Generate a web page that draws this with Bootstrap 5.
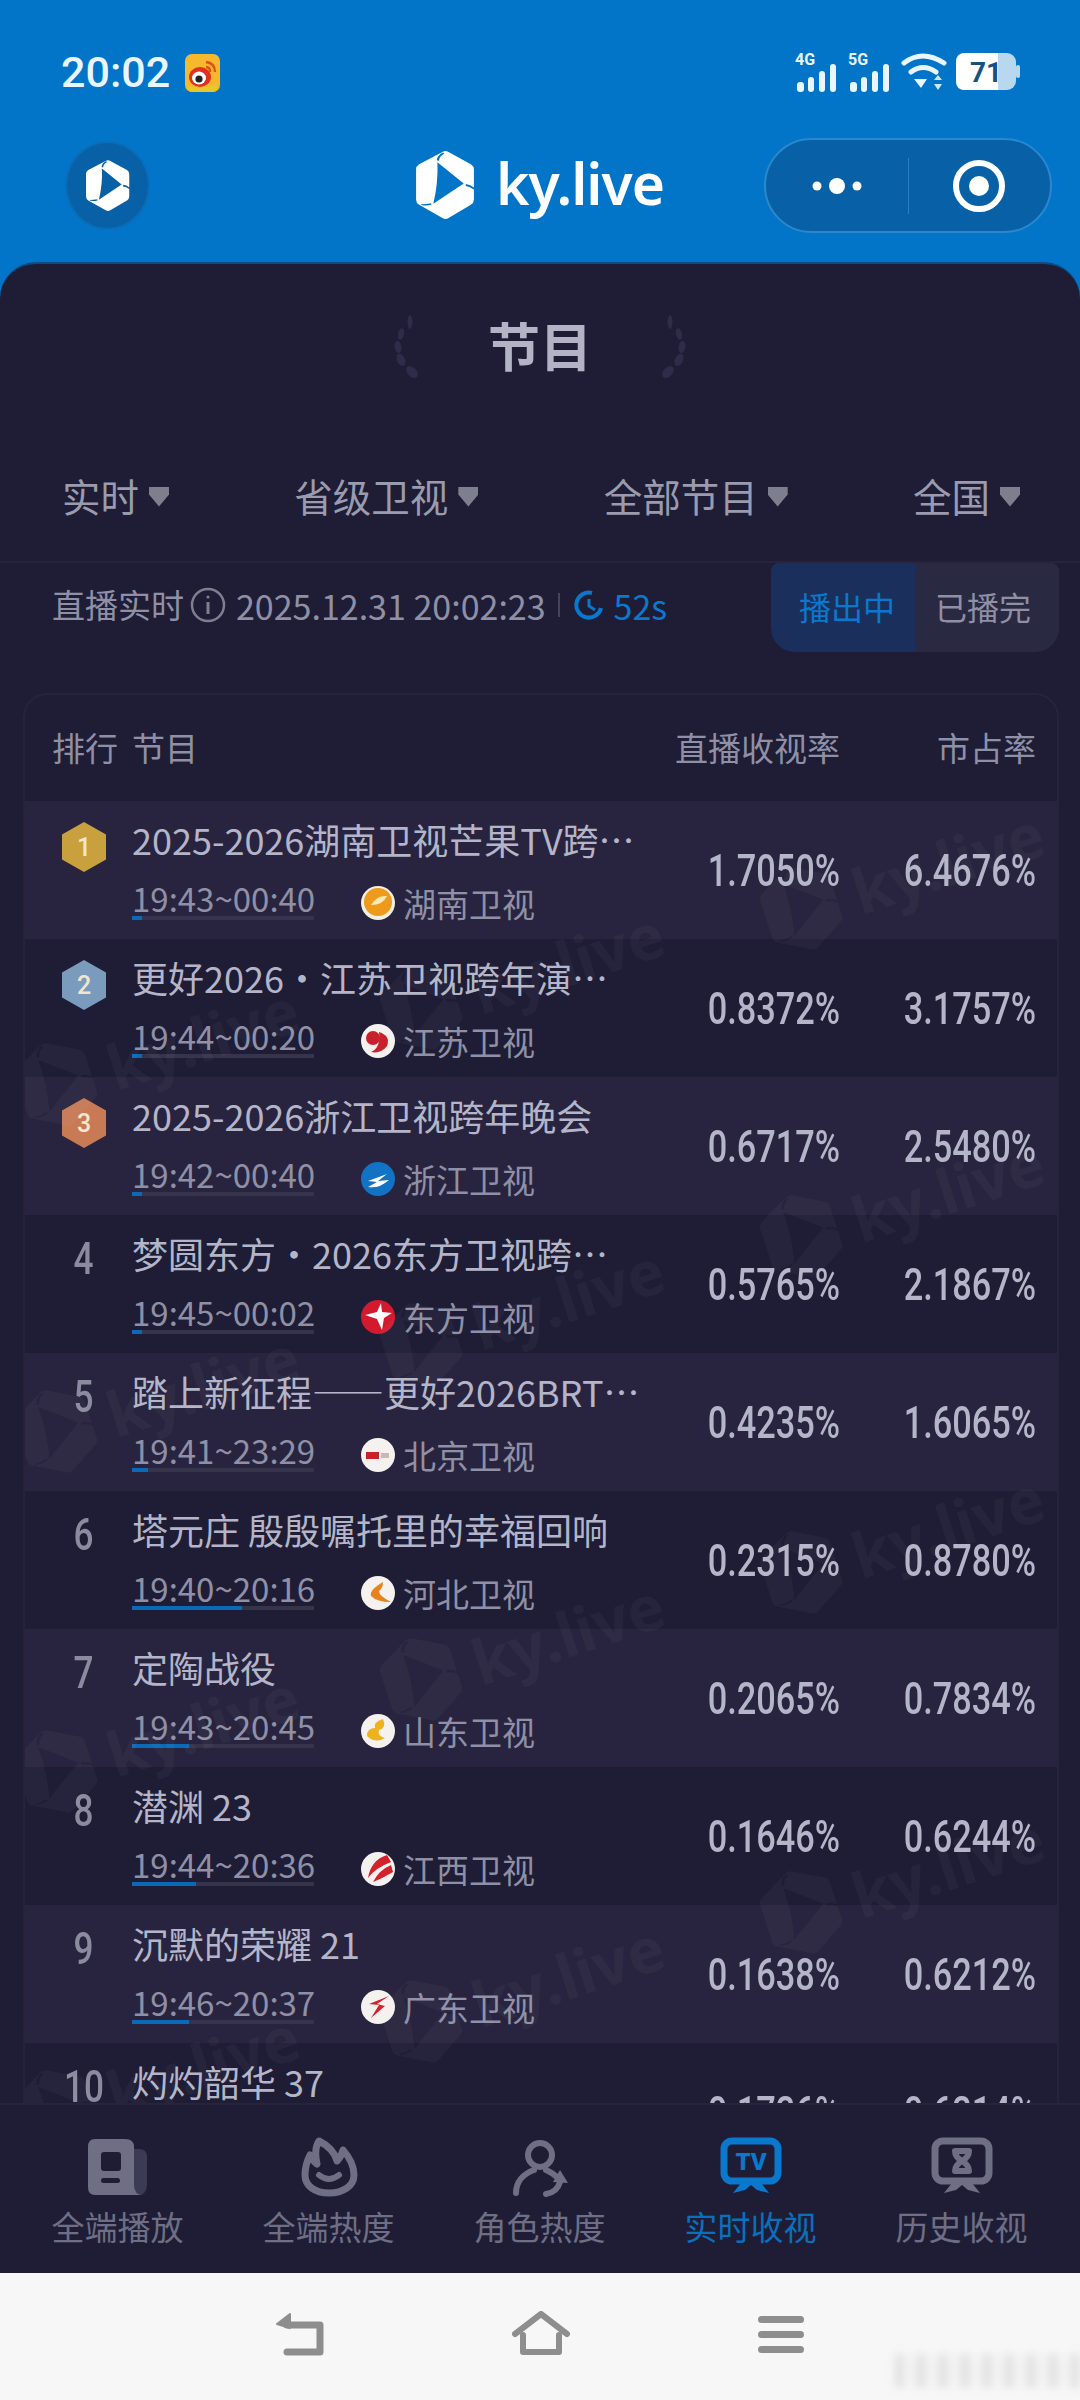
<!DOCTYPE html>
<html lang="zh-CN">
<head>
    <meta charset="UTF-8">
    <meta name="viewport" content="width=device-width, initial-scale=1.0">
    <title>ky.live 实时收视</title>
    <link href="https://cdn.jsdelivr.net/npm/bootstrap@5.3.0/dist/css/bootstrap.min.css" rel="stylesheet">
    <style>
        html, body { height: 2400px; }
        body {
            width: 1080px;
            overflow: hidden;
            background: #0275c9;
            font-family: "Noto Sans CJK SC", "Noto Sans", sans-serif;
            color: #8f90a6;
        }
        .page-wrap { height: 2400px; }

        /* blue top */
        .top-area { height: 262px; flex: none; background: #0275c9; }
        .status-row { height: 138px; padding: 46px 60px 0 61px; }
        .clock { font: 500 43px/52px Roboto, sans-serif; color: #eaf6ff; }
        .weibo { margin: 8px 0 0 15px; }
        .status-icons { margin-top: 7px; gap: 9px; }
        .sig-icon { margin-top: -6px; }
        .head-row { height: 95px; padding: 0 28px 0 65px; }
        .round-logo {
            width: 85px; height: 89px; flex: none; border-radius: 50%;
            background: #0861a7; border: 2px solid #0a6db8;
        }
        .brand { margin-left: 266px; gap: 21px; }
        .brand-name { font: 600 57px/70px "Noto Sans", sans-serif; color: #fff; letter-spacing: -1px; margin-top: -6px; }
        .capsule {
            width: 288px; height: 95px; flex: none; border-radius: 48px;
            background: #0861a7; border: 2px solid #2a88cf;
        }
        .capsule-part { flex: 1; }
        .capsule-line { width: 1px; height: 56px; background: #2a7fc2; }

        /* dark panel */
        .panel {
            min-height: 0;
            background: #1e1d35;
            border-radius: 36px 36px 0 0;
            border-top: 2px solid #0c4c86;
        }
        .title-row { height: 166px; flex: none; gap: 64px; }
        .page-title { font-size: 52px; font-weight: 700; color: #b2b3c4; line-height: 1; margin-top: -5px; }
        .filter-row { height: 133px; flex: none; padding: 0 60px 0 62px; border-bottom: 2px solid #25243c; font-size: 38.5px; color: #9a9bae; }
        .filter-item { gap: 10px; }
        .caret-shape { width: 20px; height: 20px; background: #7e7f8e; clip-path: polygon(0 0, 100% 0, 100% 40%, 50% 100%, 0 40%); margin-top: 2px; }
        .info-row { height: 89px; flex: none; padding: 0 21px 0 52px; font-size: 33px; }
        .info-text { gap: 6px; margin-top: -5px; }
        .info-date { font-size: 34px; }
        .tick { width: 2px; height: 24px; background: #45445c; margin: 0 8px 0 6px; }
        .live-blue { color: #0a78cc; font-size: 34px; }
        .seg { width: 288px; height: 89px; border-radius: 8px 8px 24px 24px; overflow: hidden; font-size: 32px; }
        .seg-on { width: 144px; background: #1a2f5c; color: #0a78cc; padding: 0 0 3px 8px; }
        .seg-off { width: 144px; background: #2a2942; padding: 0 8px 3px 0; }

        /* table */
        .rank-table {
            min-height: 0;
            margin: 41px 21px 0 23px;
            border: 2px solid #25243c;
            border-bottom: 0;
            border-radius: 24px 24px 0 0;
            overflow: hidden;
        }
        .thead-row { height: 106px; flex: none; padding: 0 21px 0 27px; font-size: 33px; }
        .th-rank { width: 80px; }
        .th-live { width: 200px; text-align: right; }
        .th-share { width: 196px; text-align: right; }
        .prog-row { height: 138px; flex: none; padding: 14px 21px 0 14px; }
        .prog-row.alt { background: #28243f; }
        .rank-col { width: 90px; margin-right: 3px; height: 48px; }
        .rank-num { display: inline-block; font: 500 44px/52px Roboto, sans-serif; color: #8a8b9f; transform: scaleX(.8); margin-top: 4px; }
        .medal {
            width: 44px; height: 50px; margin-top: 7px; color: #f1e6cf;
            font: 500 25px/1 Roboto, sans-serif;
            clip-path: polygon(50% 0, 100% 25%, 100% 75%, 50% 100%, 0 75%, 0 25%);
        }
        .prog-main { width: 530px; }
        .prog-name { font-size: 36px; line-height: 48px; color: #b4b5c8; white-space: nowrap; }
        .prog-sub { margin-top: 17px; font-size: 33px; }
        .time-wrap { width: 182px; margin-right: 47px; }
        .time-text { line-height: 36px; white-space: nowrap; }
        .time-bar { height: 4px; background: #35344a; }
        .time-fill { height: 4px; background: #0a6ab8; }
        .channel { line-height: 36px; gap: 8px; margin-top: 5px; }
        .pct {
            width: 196px; text-align: right; margin-top: 34px;
            font: 500 44px/44px Roboto, sans-serif;
            color: #b4b5c8;
            transform: scaleX(.78);
            transform-origin: right center;
        }
        .pct.first { width: 178px; }

        /* watermark over the rows */
        .wm-layer { inset: 0; pointer-events: none; }
        .wm-item {
            transform: rotate(-18deg); transform-origin: 40px 45px; gap: 14px;
            color: rgba(255, 255, 255, .035);
            font: 700 62px/90px "Noto Sans", sans-serif;
            white-space: nowrap;
        }

        /* tabs */
        .tab-bar { height: 170px; flex: none; padding: 0 12px; background: #1e1d35; border-top: 2px solid #26253d; }
        .tab-item { width: 211px; color: #6e6e84; font-size: 33px; padding-top: 32px; }
        .tab-item.on { color: #0a6fbd; }
        .tab-label { line-height: 44px; margin-top: 7px; }

        /* phone nav */
        .phone-nav { height: 127px; flex: none; background: #f7f7f7; padding-top: 38px; gap: 188px; }
        .smudge {
            right: 0; bottom: 12px; width: 185px; height: 34px; filter: blur(4px); opacity: .5;
            background: repeating-linear-gradient(90deg, #c9c9c9 0 8px, #f0f0f0 8px 22px);
        }
    </style>
</head>
<body>
    <svg width="0" height="0" class="position-absolute">
        <symbol id="ky-mark" viewBox="0 0 58 70">
            <path fill-rule="evenodd" d="M26 2 Q29 0 32 2 L54 14 Q57 16 57 19 L57 49 Q57 52 54 54 L32 67 Q29 69 26 67 L3 54 Q0 52 0 49 L0 19 Q0 16 3 14 Z M21 12 L47 33 L17 53 Q22 32 21 12 Z M20.5 10 Q21 5 26.5 2.5 L28 3.5 Q23 6 22.5 10.5 Z M49 33.5 Q54 34 57 37 L57 39 Q53 36 49 35.5 Z M15 54 Q11 55 6 54.5 L4.5 53.5 Q10 53.5 15 52.5 Z" fill="currentColor"/>
        </symbol>
    </svg>

    <div class="page-wrap d-flex flex-column position-relative">
        <div class="top-area">
            <div class="status-row d-flex justify-content-between">
                <div class="d-flex align-items-start">
                    <span class="clock">20:02</span>
                    <svg class="weibo" width="35" height="38" viewBox="0 0 35 38">
                        <rect width="35" height="38" rx="7" fill="#f6b82c"/>
                        <path d="M3 32 Q17 36 32 30 V33 Q32 38 27 38 H8 Q3 38 3 33Z" fill="#e5c92c"/>
                        <ellipse cx="15" cy="23" rx="11" ry="10" fill="#e0301e"/>
                        <ellipse cx="14" cy="24" rx="7" ry="6.5" fill="#fff"/>
                        <circle cx="14" cy="25" r="3.6" fill="#222"/>
                        <path d="M21 8 Q30 9 30 18 M21 13 Q25 13 25 18" stroke="#e0501e" stroke-width="2.5" fill="none"/>
                    </svg>
                </div>
                <div class="status-icons d-flex align-items-start">
                    <svg class="sig-icon" width="44" height="45" viewBox="0 -6 44 45" fill="#eaf6ff">
                        <text x="0" y="12" font-family="Roboto" font-weight="700" font-size="16">4G</text>
                        <rect x="2" y="29" width="7" height="10" rx="3"/><rect x="13" y="24" width="6" height="15" rx="3"/><rect x="24" y="18" width="6" height="21" rx="3"/><rect x="35" y="11" width="6" height="28" rx="3"/>
                    </svg>
                    <svg class="sig-icon" width="44" height="45" viewBox="0 -6 44 45" fill="#eaf6ff">
                        <text x="0" y="12" font-family="Roboto" font-weight="700" font-size="16">5G</text>
                        <rect x="2" y="29" width="7" height="10" rx="3"/><rect x="13" y="24" width="6" height="15" rx="3"/><rect x="24" y="18" width="6" height="21" rx="3"/><rect x="35" y="11" width="6" height="28" rx="3"/>
                    </svg>
                    <svg width="46" height="38" viewBox="0 0 46 38" fill="none" stroke="#eaf6ff" stroke-width="5" stroke-linecap="round">
                        <path d="M3 10 Q21 -4 43 10"/>
                        <path d="M10 19 Q22 10 35 19"/>
                        <path d="M13 26 L20 35 L26 26 Z" fill="#eaf6ff" stroke="none"/>
                        <path d="M33 27 L37 22 L41 27 Z M33 31 L41 31 L37 37 Z" fill="#cfe6f7" stroke="none"/>
                    </svg>
                    <svg width="64" height="37" viewBox="0 0 64 37">
                        <rect width="60" height="37" rx="9" fill="#b9d8f0"/>
                        <path d="M9 0 H42 V37 H9 Q0 37 0 28 V9 Q0 0 9 0Z" fill="#fff"/>
                        <rect x="60" y="12" width="4" height="13" rx="2" fill="#b9d8f0"/>
                        <text x="14" y="29" font-family="Roboto" font-weight="700" font-size="28" fill="#14527f">71</text>
                    </svg>
                </div>
            </div>
            <div class="head-row d-flex align-items-center">
                <div class="round-logo d-flex align-items-center justify-content-center text-white">
                    <svg width="44" height="54"><use href="#ky-mark"/></svg>
                </div>
                <div class="brand d-flex align-items-center me-auto text-white">
                    <svg width="59" height="71"><use href="#ky-mark"/></svg>
                    <span class="brand-name">ky.live</span>
                </div>
                <div class="capsule d-flex align-items-center">
                    <div class="capsule-part d-flex justify-content-center">
                        <svg width="60" height="20" fill="#fff"><circle cx="10" cy="10" r="4.5"/><circle cx="30" cy="10" r="8"/><circle cx="50" cy="10" r="4.5"/></svg>
                    </div>
                    <div class="capsule-line"></div>
                    <div class="capsule-part d-flex justify-content-center">
                        <svg width="56" height="56" viewBox="0 0 56 56"><circle cx="28" cy="28" r="23" fill="none" stroke="#fff" stroke-width="6"/><circle cx="28" cy="28" r="10" fill="#fff"/></svg>
                    </div>
                </div>
            </div>
        </div>

        <div class="panel flex-grow-1 d-flex flex-column">
            <div class="title-row d-flex align-items-center justify-content-center">
                <svg width="36" height="66" viewBox="0 0 36 66" fill="#2e2d49">
                    <ellipse cx="22" cy="8" rx="2.5" ry="7"/><ellipse cx="13" cy="20" rx="3" ry="6" transform="rotate(12 13 20)"/><ellipse cx="10" cy="33" rx="3.5" ry="6" transform="rotate(-8 10 33)"/><ellipse cx="13" cy="46" rx="4" ry="6.5" transform="rotate(-25 13 46)"/><ellipse cx="24" cy="58" rx="4.5" ry="7" transform="rotate(-45 24 58)"/>
                </svg>
                <div class="page-title">节目</div>
                <svg width="36" height="66" viewBox="0 0 36 66" fill="#2e2d49">
                    <ellipse cx="14" cy="8" rx="2.5" ry="7"/><ellipse cx="23" cy="20" rx="3" ry="6" transform="rotate(-12 23 20)"/><ellipse cx="26" cy="33" rx="3.5" ry="6" transform="rotate(8 26 33)"/><ellipse cx="23" cy="46" rx="4" ry="6.5" transform="rotate(25 23 46)"/><ellipse cx="12" cy="58" rx="4.5" ry="7" transform="rotate(45 12 58)"/>
                </svg>
            </div>
            <div class="filter-row d-flex align-items-center justify-content-between">
                <div class="filter-item d-flex align-items-center">实时<span class="caret-shape"></span></div>
                <div class="filter-item d-flex align-items-center">省级卫视<span class="caret-shape"></span></div>
                <div class="filter-item d-flex align-items-center">全部节目<span class="caret-shape"></span></div>
                <div class="filter-item d-flex align-items-center">全国<span class="caret-shape"></span></div>
            </div>
            <div class="info-row d-flex align-items-center justify-content-between">
                <div class="info-text d-flex align-items-center">
                    <span>直播实时</span>
                    <svg width="36" height="36" viewBox="0 0 36 36" fill="none" stroke="#7e7f8e" stroke-width="2.5"><circle cx="18" cy="18" r="16"/><path d="M18 15 V27" stroke-width="3"/><circle cx="18" cy="10" r="1.6" fill="#7e7f8e" stroke="none"/></svg>
                    <span class="info-date ms-1">2025.12.31 20:02:23</span>
                    <span class="tick"></span>
                    <svg width="30" height="30" viewBox="0 0 30 30" fill="none" stroke="#0a78cc" stroke-width="4"><path d="M18 3 A12.5 12.5 0 1 0 27 18"/><path d="M15 9 V16 L21 20" stroke-width="3"/></svg>
                    <span class="live-blue ms-1">52s</span>
                </div>
                <div class="seg d-flex">
                    <div class="seg-on d-flex align-items-center justify-content-center">播出中</div>
                    <div class="seg-off d-flex align-items-center justify-content-center">已播完</div>
                </div>
            </div>

            <div class="rank-table flex-grow-1 d-flex flex-column position-relative">
                <div class="thead-row d-flex align-items-center">
                    <span class="th-rank">排行</span>
                    <span class="flex-grow-1">节目</span>
                    <span class="th-live">直播收视率</span>
                    <span class="th-share">市占率</span>
                </div>
                <div id="rows"></div>
                <div id="wm" class="wm-layer position-absolute"></div>
            </div>

            <div class="tab-bar d-flex">
                <div class="tab-item d-flex flex-column align-items-center">
                    <svg width="62" height="60" viewBox="0 0 62 60">
                        <path d="M40 12 H52 Q60 12 60 20 V48 Q60 58 50 58 H40Z" fill="#3c3b55"/>
                        <path d="M8 2 H38 Q47 2 47 10 V48 Q47 58 56 58 H8 Q1 58 1 50 V10 Q1 2 8 2Z" fill="#6e6e84"/>
                        <rect x="14" y="15" width="20" height="19" rx="3" fill="#1e1d35"/>
                        <rect x="14" y="41" width="19" height="5" rx="2.5" fill="#1e1d35"/>
                    </svg>
                    <span class="tab-label">全端播放</span>
                </div>
                <div class="tab-item d-flex flex-column align-items-center">
                    <svg width="60" height="60" viewBox="0 0 60 60" fill="none" stroke="#6e6e84" stroke-linecap="round" stroke-linejoin="round">
                        <path stroke-width="7" d="M20 4 C30 9 36 16 38 24 C41 21 43 17 44 13 C52 22 55 30 55 38 C55 49 44 56 30 56 C16 56 6 49 6 38 C6 30 8 24 11 18 C13 22 15 25 18 27 C16 18 16 10 20 4Z"/>
                        <path stroke-width="6" d="M20 38 Q30 46 40 38"/>
                    </svg>
                    <span class="tab-label">全端热度</span>
                </div>
                <div class="tab-item d-flex flex-column align-items-center">
                    <svg width="60" height="60" viewBox="0 0 60 60" fill="none" stroke="#6e6e84" stroke-width="6" stroke-linecap="round">
                        <circle cx="30" cy="18" r="12"/>
                        <path d="M6 56 C6 45 13 37 24 33"/>
                        <path d="M36 33 C41 35 45 38 49 42"/>
                        <path d="M36 57 C43 56 48 52 50 45"/>
                        <path d="M50 33 L58 46 L43 45 Z" fill="#6e6e84" stroke="none"/>
                    </svg>
                    <span class="tab-label">角色热度</span>
                </div>
                <div class="tab-item on d-flex flex-column align-items-center">
                    <svg width="62" height="60" viewBox="0 0 62 60" fill="none" stroke="#0a78cc">
                        <rect x="4" y="4" width="54" height="40" rx="8" stroke-width="7"/>
                        <path d="M21 46 L13 56 L25 53 L31 48 L37 53 L49 56 L41 46Z" fill="#0a78cc" stroke="none"/>
                        <text x="31" y="33" text-anchor="middle" font-family="Roboto" font-weight="900" font-size="24" fill="#0a78cc" stroke="none">TV</text>
                    </svg>
                    <span class="tab-label">实时收视</span>
                </div>
                <div class="tab-item d-flex flex-column align-items-center">
                    <svg width="62" height="60" viewBox="0 0 62 60" fill="none" stroke="#6e6e84">
                        <rect x="4" y="4" width="54" height="40" rx="8" stroke-width="7"/>
                        <path d="M21 46 L13 56 L25 53 L31 48 L37 53 L49 56 L41 46Z" fill="#6e6e84" stroke="none"/>
                        <path d="M24 14 H38 Q38 20 31 24 Q38 28 38 34 H24 Q24 28 31 24 Q24 20 24 14Z" stroke-width="6" stroke-linejoin="round"/>
                    </svg>
                    <span class="tab-label">历史收视</span>
                </div>
            </div>
        </div>

        <div class="phone-nav d-flex justify-content-center position-relative">
            <svg width="48" height="46" viewBox="0 0 48 46" fill="none" stroke="#8e8e8e" stroke-width="7" stroke-linejoin="round" stroke-linecap="round">
                <path d="M11 14 H44 V41 H11"/>
                <path d="M14 3 L1 13 L14 17Z" fill="#8e8e8e" stroke-width="2"/>
            </svg>
            <svg width="58" height="46" viewBox="0 0 58 46" fill="none" stroke="#8e8e8e" stroke-width="6" stroke-linejoin="round" stroke-linecap="round">
                <path d="M3 23 L29 3 L55 23"/>
                <path d="M11 24 V41 H47 V24" />
            </svg>
            <svg width="46" height="46" viewBox="0 0 46 46" fill="#8e8e8e">
                <rect y="5" width="46" height="7" rx="3.5"/><rect y="20" width="46" height="7" rx="3.5"/><rect y="35" width="46" height="7" rx="3.5"/>
            </svg>
            <div class="smudge position-absolute"></div>
        </div>
    </div>

    <script src="https://cdn.jsdelivr.net/npm/bootstrap@5.3.0/dist/js/bootstrap.bundle.min.js"></script>
    <script>
        const stations = {
            hunan: '<circle cx="17" cy="17" r="17" fill="#f3efe2"/><circle cx="17" cy="16" r="14" fill="#ee9a1a"/><path d="M10 19 Q16 9 26 10 Q22 19 10 19Z" fill="#fbe9b8"/>',
            jiangsu: '<circle cx="17" cy="17" r="17" fill="#f4f1ee"/><circle cx="12" cy="14" r="7" fill="#c9202c"/><path d="M18 8 Q30 12 26 22 Q20 30 10 28 Q20 24 18 8Z" fill="#c9202c"/>',
            zhejiang: '<circle cx="17" cy="17" r="17" fill="#1272c4"/><path d="M7 19 L26 12 L17 19 L28 18 Q18 27 7 25 L16 20Z" fill="#fff"/>',
            dongfang: '<circle cx="17" cy="17" r="17" fill="#d21a2e"/><path d="M20 3 L21 12 L31 13 L23 18 L21 30 L16 19 L4 15 L16 12Z" fill="#fff"/>',
            beijing: '<circle cx="17" cy="17" r="17" fill="#f4f1ee"/><rect x="5" y="14" width="13" height="7" fill="#c9202c"/><rect x="20" y="15" width="8" height="5" fill="#c9b9b0"/>',
            hebei: '<circle cx="17" cy="17" r="17" fill="#f4f1ee"/><path d="M22 6 Q8 14 10 20 Q16 26 30 26 Q18 20 18 15 Q22 12 22 6Z" fill="#e8821e"/>',
            shandong: '<circle cx="17" cy="17" r="17" fill="#f4f1ee"/><path d="M22 5 Q12 8 14 14 Q6 14 6 22 Q14 30 24 24 Q16 22 18 16 Q26 14 22 5Z" fill="#eeb21e"/>',
            jiangxi: '<circle cx="17" cy="17" r="17" fill="#f4f1ee"/><path d="M26 3 Q10 8 7 26 Q14 16 30 10Z M30 13 Q18 18 12 30 Q22 26 32 20Z" fill="#d2202c"/>',
            guangdong: '<circle cx="17" cy="17" r="17" fill="#f4f1ee"/><path d="M28 6 L8 14 L18 15 L10 28 L24 16 L16 14Z" fill="#d2202c"/>'
        };

        const programs = [
            { name: "2025-2026湖南卫视芒果TV跨…", time: "19:43~00:40", channel: "湖南卫视", logo: "hunan", live: "1.7050%", share: "6.4676%", fill: 10, medal: "#c9a03e" },
            { name: "更好2026·江苏卫视跨年演…", time: "19:44~00:20", channel: "江苏卫视", logo: "jiangsu", live: "0.8372%", share: "3.1757%", fill: 10, medal: "#7b9bbd" },
            { name: "2025-2026浙江卫视跨年晚会", time: "19:42~00:40", channel: "浙江卫视", logo: "zhejiang", live: "0.6717%", share: "2.5480%", fill: 10, medal: "#c87a55" },
            { name: "梦圆东方·2026东方卫视跨…", time: "19:45~00:02", channel: "东方卫视", logo: "dongfang", live: "0.5765%", share: "2.1867%", fill: 10 },
            { name: "踏上新征程——更好2026BRT…", time: "19:41~23:29", channel: "北京卫视", logo: "beijing", live: "0.4235%", share: "1.6065%", fill: 16 },
            { name: "塔元庄 殷殷嘱托里的幸福回响", time: "19:40~20:16", channel: "河北卫视", logo: "hebei", live: "0.2315%", share: "0.8780%", fill: 110 },
            { name: "定陶战役", time: "19:43~20:45", channel: "山东卫视", logo: "shandong", live: "0.2065%", share: "0.7834%", fill: 57 },
            { name: "潜渊 23", time: "19:44~20:36", channel: "江西卫视", logo: "jiangxi", live: "0.1646%", share: "0.6244%", fill: 64 },
            { name: "沉默的荣耀 21", time: "19:46~20:37", channel: "广东卫视", logo: "guangdong", live: "0.1638%", share: "0.6212%", fill: 57 },
            { name: "灼灼韶华 37", time: "19:45~20:35", channel: "安徽卫视", logo: "hunan", live: "0.1726%", share: "0.6214%", fill: 57 }
        ];

        let rowHTML = "";
        programs.forEach((p, i) => {
            const rank = p.medal
                ? `<div class="medal d-flex align-items-center justify-content-center" style="background:${p.medal}">${i + 1}</div>`
                : `<div class="rank-num">${i + 1}</div>`;
            rowHTML += `<div class="prog-row d-flex ${i % 2 === 0 ? "alt" : ""}">
                <div class="rank-col d-flex justify-content-center">${rank}</div>
                <div class="prog-main">
                    <div class="prog-name">${p.name}</div>
                    <div class="prog-sub d-flex">
                        <div class="time-wrap">
                            <div class="time-text">${p.time}</div>
                            <div class="time-bar"><div class="time-fill" style="width:${p.fill}px"></div></div>
                        </div>
                        <div class="channel d-flex align-items-center">
                            <svg width="34" height="34" viewBox="0 0 34 34">${stations[p.logo]}</svg>
                            <span>${p.channel}</span>
                        </div>
                    </div>
                </div>
                <div class="pct first">${p.live}</div>
                <div class="pct">${p.share}</div>
            </div>`;
        });
        document.getElementById("rows").innerHTML = rowHTML;

        // watermark stamps: page coordinates of each logo centre
        const stamps = [
            [800, 907], [800, 1235], [800, 1571], [800, 1911],
            [420, 1007], [420, 1343], [420, 1678], [420, 2020],
            [55, 1083], [55, 1430], [55, 1770], [55, 2110]
        ];
        let wmHTML = "";
        stamps.forEach(s => {
            wmHTML += `<div class="wm-item position-absolute d-flex align-items-center" style="left:${s[0] - 23 - 40}px;top:${s[1] - 693 - 45}px">
                <svg width="80" height="90"><use href="#ky-mark"/></svg><span>ky.live</span></div>`;
        });
        document.getElementById("wm").innerHTML = wmHTML;
    </script>
</body>
</html>
